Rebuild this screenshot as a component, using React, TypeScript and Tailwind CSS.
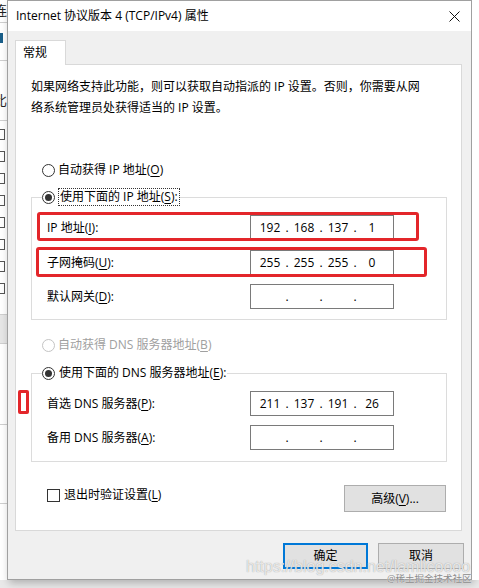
import React from 'react';

const Radio: React.FC<{ checked?: boolean; disabled?: boolean }> = ({ checked, disabled }) => (
  <span
    className={`w-[13px] h-[13px] shrink-0 rounded-full border bg-white flex items-center justify-center ${
      disabled ? 'border-[#c4c4c4]' : 'border-[#333333]'
    }`}
  >
    {checked && <span className="w-[7px] h-[7px] rounded-full bg-[#333333]" />}
  </span>
);

const IpBox: React.FC<{ parts?: string[] }> = ({ parts }) => (
  <div className="w-[144px] h-[25px] border border-[#7a7a7a] bg-white flex items-center pl-[5px]">
    {[0, 1, 2, 3].map(i => (
      <React.Fragment key={i}>
        <span className="w-[28px] text-center">{parts ? parts[i] : ''}</span>
        {i < 3 && <span className="w-[6px] text-center">.</span>}
      </React.Fragment>
    ))}
  </div>
);

const Key: React.FC<{ k: string }> = ({ k }) => <span className="underline underline-offset-2">{k}</span>;

const Row: React.FC<{ label: React.ReactNode; parts?: string[]; className?: string }> = ({ label, parts, className }) => (
  <div className={`flex items-center ${className ?? ''}`}>
    <div className="w-[203px]">{label}</div>
    <IpBox parts={parts} />
  </div>
);

const Button: React.FC<{ children: React.ReactNode; className?: string }> = ({ children, className }) => (
  <div
    className={`h-[26px] bg-[#e1e1e1] border border-[#adadad] flex items-center justify-center ${className ?? ''}`}
  >
    {children}
  </div>
);

export default function App() {
  return (
    <div className="relative w-[479px] h-[588px] overflow-hidden bg-white text-[12px] leading-[18px] text-black font-['Open_Sans','Noto_Sans_CJK_SC',sans-serif]">
      <div className="flex h-[580px]">
        {/* window behind the dialog */}
        <div className="w-[7px] shrink-0 overflow-hidden bg-white flex flex-col text-[#222]">
          <div className="h-[22px] -ml-[6px] leading-[20px] text-[13px]">连</div>
          <div className="h-[38px] border-t border-[#cfcfcf] pt-[10px]">
            <div className="w-[3px] h-[10px] bg-[#1a5f8a]" />
          </div>
          <div className="h-[60px] border-t border-[#cfcfcf] -ml-[6px] pt-[30px] text-[13px]">比</div>
          <div className="flex flex-col gap-[11px] pt-[8px] border-t border-[#cfcfcf]">
            {[0, 1, 2, 3, 4, 5, 6, 7].map(i => (
              <div key={i} className="-ml-[6px] w-[11px] h-[11px] border border-[#555] bg-white" />
            ))}
          </div>
          <div className="mt-[20px] h-[30px] bg-[#e6e6e6] border-y border-[#cfcfcf]" />
          <div className="h-[40px] -ml-[8px] pt-[10px] text-[13px]">扌</div>
          <div className="h-[80px] border-y border-[#cfcfcf] mt-[40px]" />
        </div>

        {/* dialog */}
        <div className="w-[465px] shrink-0 border border-[#a0a0a0] bg-[#f0f0f0] flex flex-col shadow-[2px_3px_8px_rgba(0,0,0,0.25)]">
          <div className="h-[30px] bg-white flex items-center justify-between pl-[8px] pr-[10px]">
            <span>Internet 协议版本 4 (TCP/IPv4) 属性</span>
            <svg width="11" height="11" viewBox="0 0 11 11" className="mr-[1px]">
              <path d="M0.5 0.5L10.5 10.5M10.5 0.5L0.5 10.5" stroke="#111" strokeWidth="1" />
            </svg>
          </div>

          <div className="flex flex-col pl-[7px] pr-[7px] pt-[9px]">
            <div className="w-[51px] h-[25px] bg-white border border-b-0 border-[#d9d9d9] -mb-px relative z-10 flex items-center pl-[7px] pb-[1px]">
              常规
            </div>
            <div className="w-[447px] h-[467px] bg-white border border-[#d9d9d9] pl-[15px] pr-[14px] pt-[11px] flex flex-col">
              <p className="leading-[21px] pr-[20px]">
                如果网络支持此功能，则可以获取自动指派的 IP 设置。否则，你需要从网络系统管理员处获得适当的 IP 设置。
              </p>

              <div className="mt-[43px] h-[18px] ml-[11px] flex items-center gap-[3px]">
                <Radio />
                <span>
                  自动获得 IP 地址(<Key k="O" />)
                </span>
              </div>

              <fieldset className="mt-[9px] border border-[#dcdcdc] pb-[10px]">
                <legend className="ml-[10px] h-[18px] flex items-center gap-[3px]">
                  <Radio checked />
                  <span className="border border-dotted border-[#333] px-[1px] leading-[16px]">
                    使用下面的 IP 地址(<Key k="S" />):
                  </span>
                </legend>
                <div className="pl-[15px] pt-[9px] flex flex-col">
                  <Row label={<>IP 地址(<Key k="I" />):</>} parts={['192', '168', '137', '1']} />
                  <Row className="mt-[10px]" label={<>子网掩码(<Key k="U" />):</>} parts={['255', '255', '255', '0']} />
                  <Row className="mt-[9px]" label={<>默认网关(<Key k="D" />):</>} />
                </div>
              </fieldset>

              <div className="mt-[16px] h-[18px] ml-[11px] flex items-center gap-[3px] text-[#a0a0a0]">
                <Radio disabled />
                <span>
                  自动获得 DNS 服务器地址(<Key k="B" />)
                </span>
              </div>

              <fieldset className="mt-[10px] border border-[#dcdcdc] pb-[11px]">
                <legend className="ml-[10px] h-[18px] flex items-center gap-[3px]">
                  <Radio checked />
                  <span className="px-[1px]">
                    使用下面的 DNS 服务器地址(<Key k="E" />):
                  </span>
                </legend>
                <div className="pl-[15px] pt-[9px] flex flex-col">
                  <Row label={<>首选 DNS 服务器(<Key k="P" />):</>} parts={['211', '137', '191', '26']} />
                  <Row className="mt-[9px]" label={<>备用 DNS 服务器(<Key k="A" />):</>} />
                </div>
              </fieldset>

              <div className="mt-[23px] flex items-start justify-between pr-px">
                <div className="ml-[16px] mt-[1px] h-[18px] flex items-center gap-[4px]">
                  <span className="w-[13px] h-[13px] border border-[#333] bg-white" />
                  <span>
                    退出时验证设置(<Key k="L" />)
                  </span>
                </div>
                <Button className="w-[102px] h-[27px]">
                  高级(<Key k="V" />)...
                </Button>
              </div>
            </div>

            <div className="mt-[12px] flex justify-end gap-[10px] pr-0">
              <div className="w-[85px] h-[26px] bg-[#e1e1e1] border-2 border-[#0078d7] flex items-center justify-center">
                确定
              </div>
              <Button className="w-[86px]">取消</Button>
            </div>
          </div>
        </div>
        <div className="flex-1 bg-white" />
      </div>
      <div className="h-[8px] bg-[#e9e9e9]" />

      {/* annotation marks drawn over the screenshot */}
      <div className="absolute left-[37px] top-[212px] w-[382px] h-[29px] border-[3px] border-[#e3262a] rounded-[3px]" />
      <div className="absolute left-[36px] top-[247px] w-[391px] h-[30px] border-[3px] border-[#e3262a] rounded-[3px]" />
      <div className="absolute left-[18px] top-[390px] w-[11px] h-[24px] border-[3px] border-[#e3262a] rounded-[2px]" />

      {/* watermark */}
      <div className="absolute left-[246px] top-[555px] text-[16px] leading-[24px] font-['Liberation_Sans',sans-serif] text-white/75 [text-shadow:0_0_1px_#8f8f8f]">
        https://blog.csdn.net/lamlicoooo
      </div>
      <div className="absolute left-[387px] top-[573px] text-[9.5px] leading-[12px] text-[#8a8a8a] [text-shadow:0_0_1px_#fff]">
        @稀土掘金技术社区
      </div>
    </div>
  );
}
